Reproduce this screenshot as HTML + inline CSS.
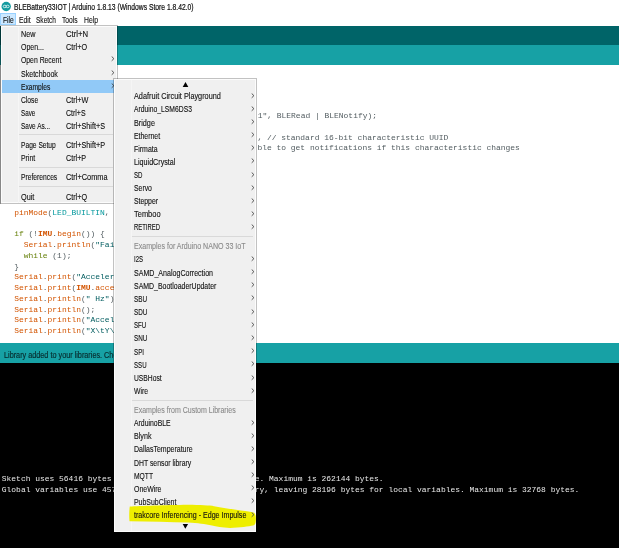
<!DOCTYPE html>
<html><head><meta charset="utf-8">
<style>
*{margin:0;padding:0;box-sizing:border-box}
html,body{width:619px;height:548px;overflow:hidden;background:#fff;position:relative;font-family:"Liberation Sans",sans-serif}
.r{position:absolute}
.t{position:absolute;white-space:pre;line-height:1;filter:blur(0.3px)}
.m{font-family:"Liberation Mono",monospace;font-size:7.965px}
.k{color:#d35400}.kb{color:#d35400;font-weight:bold}.c{color:#00979c}.g{color:#66800a}.p{color:#525c60}.s{color:#005c5f}
.menu{background:#f0f0f0;border:1px solid #fcfcfc;box-shadow:0 0 0 1px rgba(0,0,0,0.24)}
</style></head><body>
<div class="r" style="left:0px;top:0px;width:619px;height:26px;background:#ffffff;"></div>
<div class="r" style="left:0px;top:26.4px;width:619px;height:18.6px;background:#006468;"></div>
<div class="r" style="left:0px;top:45px;width:619px;height:20px;background:#17a1a5;"></div>
<div class="r" style="left:0px;top:65px;width:619px;height:278px;background:#ffffff;"></div>
<div class="r" style="left:0px;top:343px;width:619px;height:20px;background:#17a1a5;"></div>
<div class="r" style="left:0px;top:363px;width:619px;height:185px;background:#000000;"></div>
<svg class="r" style="left:0;top:0" width="13" height="13" viewBox="0 0 13 13"><circle cx="6.2" cy="6.45" r="4.7" fill="#149ba0"/><ellipse cx="4.75" cy="6.45" rx="1.55" ry="1.25" fill="none" stroke="#d8f0f0" stroke-width="0.9"/><ellipse cx="7.65" cy="6.45" rx="1.55" ry="1.25" fill="none" stroke="#d8f0f0" stroke-width="0.9"/></svg>
<div class="t" style="left:14.00px;top:2.98px;font-size:7.4px;color:#111;transform:scale(0.9115,1.1200);transform-origin:0 0;-webkit-text-stroke:0.18px #111;">BLEBattery33IOT | Arduino 1.8.13 (Windows Store 1.8.42.0)</div>
<div class="r" style="left:0px;top:12.7px;width:16.2px;height:12.4px;background:#cce8ff;border:1px solid #99d1ff;box-sizing:border-box"></div>
<div class="t" style="left:2.70px;top:15.78px;font-size:7.4px;color:#111;transform:scale(0.8984,1.1200);transform-origin:0 0;-webkit-text-stroke:0.1px #111;">File</div>
<div class="t" style="left:18.60px;top:15.78px;font-size:7.4px;color:#111;transform:scale(0.9194,1.1200);transform-origin:0 0;-webkit-text-stroke:0.1px #111;">Edit</div>
<div class="t" style="left:35.80px;top:15.78px;font-size:7.4px;color:#111;transform:scale(0.8853,1.1200);transform-origin:0 0;-webkit-text-stroke:0.1px #111;">Sketch</div>
<div class="t" style="left:61.80px;top:15.78px;font-size:7.4px;color:#111;transform:scale(0.9087,1.1200);transform-origin:0 0;-webkit-text-stroke:0.1px #111;">Tools</div>
<div class="t" style="left:83.80px;top:15.78px;font-size:7.4px;color:#111;transform:scale(0.9211,1.1200);transform-origin:0 0;-webkit-text-stroke:0.1px #111;">Help</div>
<div class="t m" style="left:257.70px;top:112.22px"><span class="p">1&quot;, BLERead | BLENotify);</span></div>
<div class="t m" style="left:257.40px;top:133.70px"><span class="p">, // standard 16-bit characteristic UUID</span></div>
<div class="t m" style="left:257.40px;top:144.44px"><span class="p">ble to get notifications if this characteristic changes</span></div>
<div class="t m" style="left:4.60px;top:208.88px"><span class="p">  </span><span class="k">pinMode</span><span class="p">(</span><span class="c">LED_BUILTIN</span><span class="p">, OUTPUT);</span></div>
<div class="t m" style="left:4.60px;top:230.36px"><span class="p">  </span><span class="g">if</span><span class="p"> (!</span><span class="kb">IMU</span><span class="p">.</span><span class="k">begin</span><span class="p">()) {</span></div>
<div class="t m" style="left:4.60px;top:241.10px"><span class="p">    </span><span class="k">Serial</span><span class="p">.</span><span class="k">println</span><span class="p">(</span><span class="s">&quot;Failed to initialize IMU!&quot;</span><span class="p">);</span></div>
<div class="t m" style="left:4.60px;top:251.84px"><span class="p">    </span><span class="g">while</span><span class="p"> (1);</span></div>
<div class="t m" style="left:4.60px;top:262.58px"><span class="p">  }</span></div>
<div class="t m" style="left:4.60px;top:273.32px"><span class="p">  </span><span class="k">Serial</span><span class="p">.</span><span class="k">print</span><span class="p">(</span><span class="s">&quot;Accelerometer sample rate = &quot;</span><span class="p">);</span></div>
<div class="t m" style="left:4.60px;top:284.06px"><span class="p">  </span><span class="k">Serial</span><span class="p">.</span><span class="k">print</span><span class="p">(</span><span class="kb">IMU</span><span class="p">.</span><span class="k">accelerationSampleRate</span><span class="p">());</span></div>
<div class="t m" style="left:4.60px;top:294.80px"><span class="p">  </span><span class="k">Serial</span><span class="p">.</span><span class="k">println</span><span class="p">(</span><span class="s">&quot; Hz&quot;</span><span class="p">);</span></div>
<div class="t m" style="left:4.60px;top:305.54px"><span class="p">  </span><span class="k">Serial</span><span class="p">.</span><span class="k">println</span><span class="p">();</span></div>
<div class="t m" style="left:4.60px;top:316.28px"><span class="p">  </span><span class="k">Serial</span><span class="p">.</span><span class="k">println</span><span class="p">(</span><span class="s">&quot;Acceleration in G&#x27;s&quot;</span><span class="p">);</span></div>
<div class="t m" style="left:4.60px;top:327.02px"><span class="p">  </span><span class="k">Serial</span><span class="p">.</span><span class="k">println</span><span class="p">(</span><span class="s">&quot;X\tY\tZ&quot;</span><span class="p">);</span></div>
<div class="t" style="left:3.90px;top:350.88px;font-size:7.4px;color:#072c2e;transform:scale(0.9825,1.1200);transform-origin:0 0;-webkit-text-stroke:0.15px #072c2e;">Library added to your libraries. Check "Include library" menu</div>
<div class="t m" style="left:1.8px;top:474.82px;color:#e8e8e8">Sketch uses 56416 bytes (21%) of program storage space. Maximum is 262144 bytes.</div>
<div class="t m" style="left:1.8px;top:485.52px;color:#e8e8e8">Global variables use 4572 bytes (13%) of dynamic memory, leaving 28196 bytes for local variables. Maximum is 32768 bytes.</div>
<div class="r menu" style="left:1px;top:26.2px;width:116.2px;height:177.1px"></div>
<div class="r" style="left:0px;top:26px;width:1px;height:178px;background:rgba(0,0,0,0.3);"></div>
<div class="r" style="left:17.5px;top:26.5px;width:1px;height:176px;background:#f6f6f6;"></div>
<div class="r" style="left:1.6px;top:79.8px;width:113px;height:13.1px;background:#91c9f7;"></div>
<div class="t" style="left:20.60px;top:30.08px;font-size:7.4px;color:#101010;transform:scale(0.9732,1.1200);transform-origin:0 0;-webkit-text-stroke:0.1px #101010;">New</div>
<div class="t" style="left:66.00px;top:30.08px;font-size:7.4px;color:#101010;transform:scale(1.0458,1.1200);transform-origin:0 0;-webkit-text-stroke:0.1px #101010;">Ctrl+N</div>
<div class="t" style="left:20.60px;top:43.18px;font-size:7.4px;color:#101010;transform:scale(0.9428,1.1200);transform-origin:0 0;-webkit-text-stroke:0.1px #101010;">Open...</div>
<div class="t" style="left:66.00px;top:43.18px;font-size:7.4px;color:#101010;transform:scale(0.9732,1.1200);transform-origin:0 0;-webkit-text-stroke:0.1px #101010;">Ctrl+O</div>
<div class="t" style="left:20.60px;top:56.38px;font-size:7.4px;color:#101010;transform:scale(0.9252,1.1200);transform-origin:0 0;-webkit-text-stroke:0.1px #101010;">Open Recent</div>
<svg class="r" style="left:111.20px;top:56.40px" width="4" height="6" viewBox="0 0 4 6"><path d="M0.7 0.5 L2.9 2.65 L0.7 4.8" fill="none" stroke="#4a4a4a" stroke-width="0.95"/></svg>
<div class="t" style="left:20.60px;top:69.58px;font-size:7.4px;color:#101010;transform:scale(0.9543,1.1200);transform-origin:0 0;-webkit-text-stroke:0.1px #101010;">Sketchbook</div>
<svg class="r" style="left:111.20px;top:69.60px" width="4" height="6" viewBox="0 0 4 6"><path d="M0.7 0.5 L2.9 2.65 L0.7 4.8" fill="none" stroke="#4a4a4a" stroke-width="0.95"/></svg>
<div class="t" style="left:20.60px;top:82.98px;font-size:7.4px;color:#101010;transform:scale(0.9019,1.1200);transform-origin:0 0;-webkit-text-stroke:0.1px #101010;">Examples</div>
<svg class="r" style="left:111.20px;top:83.00px" width="4" height="6" viewBox="0 0 4 6"><path d="M0.7 0.5 L2.9 2.65 L0.7 4.8" fill="none" stroke="#4a4a4a" stroke-width="0.95"/></svg>
<div class="t" style="left:20.60px;top:96.08px;font-size:7.4px;color:#101010;transform:scale(0.9061,1.1200);transform-origin:0 0;-webkit-text-stroke:0.1px #101010;">Close</div>
<div class="t" style="left:66.00px;top:96.08px;font-size:7.4px;color:#101010;transform:scale(0.9857,1.1200);transform-origin:0 0;-webkit-text-stroke:0.1px #101010;">Ctrl+W</div>
<div class="t" style="left:20.60px;top:109.18px;font-size:7.4px;color:#101010;transform:scale(0.8515,1.1200);transform-origin:0 0;-webkit-text-stroke:0.1px #101010;">Save</div>
<div class="t" style="left:66.00px;top:109.18px;font-size:7.4px;color:#101010;transform:scale(0.9451,1.1200);transform-origin:0 0;-webkit-text-stroke:0.1px #101010;">Ctrl+S</div>
<div class="t" style="left:20.60px;top:122.08px;font-size:7.4px;color:#101010;transform:scale(0.8725,1.1200);transform-origin:0 0;-webkit-text-stroke:0.1px #101010;">Save As...</div>
<div class="t" style="left:66.00px;top:122.08px;font-size:7.4px;color:#101010;transform:scale(0.9797,1.1200);transform-origin:0 0;-webkit-text-stroke:0.1px #101010;">Ctrl+Shift+S</div>
<div class="t" style="left:20.60px;top:141.18px;font-size:7.4px;color:#101010;transform:scale(0.8998,1.1200);transform-origin:0 0;-webkit-text-stroke:0.1px #101010;">Page Setup</div>
<div class="t" style="left:66.00px;top:141.18px;font-size:7.4px;color:#101010;transform:scale(0.9797,1.1200);transform-origin:0 0;-webkit-text-stroke:0.1px #101010;">Ctrl+Shift+P</div>
<div class="t" style="left:20.60px;top:154.28px;font-size:7.4px;color:#101010;transform:scale(0.9275,1.1200);transform-origin:0 0;-webkit-text-stroke:0.1px #101010;">Print</div>
<div class="t" style="left:66.00px;top:154.28px;font-size:7.4px;color:#101010;transform:scale(0.9691,1.1200);transform-origin:0 0;-webkit-text-stroke:0.1px #101010;">Ctrl+P</div>
<div class="t" style="left:20.60px;top:173.38px;font-size:7.4px;color:#101010;transform:scale(0.9090,1.1200);transform-origin:0 0;-webkit-text-stroke:0.1px #101010;">Preferences</div>
<div class="t" style="left:66.00px;top:173.38px;font-size:7.4px;color:#101010;transform:scale(0.9954,1.1200);transform-origin:0 0;-webkit-text-stroke:0.1px #101010;">Ctrl+Comma</div>
<div class="t" style="left:20.60px;top:192.58px;font-size:7.4px;color:#101010;transform:scale(0.9890,1.1200);transform-origin:0 0;-webkit-text-stroke:0.1px #101010;">Quit</div>
<div class="t" style="left:66.00px;top:192.58px;font-size:7.4px;color:#101010;transform:scale(0.9732,1.1200);transform-origin:0 0;-webkit-text-stroke:0.1px #101010;">Ctrl+Q</div>
<div class="r" style="left:19px;top:134.4px;width:94px;height:1px;background:#d9d9d9;"></div>
<div class="r" style="left:19px;top:167.0px;width:94px;height:1px;background:#d9d9d9;"></div>
<div class="r" style="left:19px;top:186.0px;width:94px;height:1px;background:#d9d9d9;"></div>
<div class="r menu" style="left:113.9px;top:78.9px;width:142.5px;height:453.2px"></div>
<div class="r" style="left:131.3px;top:79.5px;width:1px;height:451px;background:#f5f5f5;"></div>
<svg class="r" style="left:0;top:0" width="619" height="548" viewBox="0 0 619 548"><path d="M185.5 82.0 L188.3 86.9 L182.7 86.9z" fill="#000"/><path d="M182.7 523.9 L188.1 523.9 L185.3 528.8z" fill="#000"/></svg>
<svg class="r" style="left:0;top:0" width="619" height="548" viewBox="0 0 619 548"><path d="M129.8 506.6 C140 506 165 505.2 188 504.8 C200 504.9 210 505.4 214 506.2 C222 507.5 232 509.3 241 510.4 C247 511.1 251 511.6 253.5 512.6 C255.6 513.8 255.9 516 255.9 519 C255.9 522.5 255.6 524.8 253 525.5 C249 526.5 240 527.4 230 527.9 C222 527.8 216 526.5 212 525.6 C205 524 198 522.8 188 522.4 C170 522 150 521.6 129.5 521.2 C129 516 129.2 510 129.8 506.6z" fill="#eeee00"/></svg>
<div class="t" style="left:133.60px;top:92.28px;font-size:7.4px;color:#101010;transform:scale(0.9881,1.1200);transform-origin:0 0;-webkit-text-stroke:0.1px #101010;">Adafruit Circuit Playground</div>
<svg class="r" style="left:251.10px;top:92.80px" width="4" height="6" viewBox="0 0 4 6"><path d="M0.7 0.5 L2.9 2.65 L0.7 4.8" fill="none" stroke="#4a4a4a" stroke-width="0.95"/></svg>
<div class="t" style="left:133.60px;top:105.40px;font-size:7.4px;color:#101010;transform:scale(0.9154,1.1200);transform-origin:0 0;-webkit-text-stroke:0.1px #101010;">Arduino_LSM6DS3</div>
<svg class="r" style="left:251.10px;top:105.92px" width="4" height="6" viewBox="0 0 4 6"><path d="M0.7 0.5 L2.9 2.65 L0.7 4.8" fill="none" stroke="#4a4a4a" stroke-width="0.95"/></svg>
<div class="t" style="left:133.60px;top:118.52px;font-size:7.4px;color:#101010;transform:scale(0.9786,1.1200);transform-origin:0 0;-webkit-text-stroke:0.1px #101010;">Bridge</div>
<svg class="r" style="left:251.10px;top:119.04px" width="4" height="6" viewBox="0 0 4 6"><path d="M0.7 0.5 L2.9 2.65 L0.7 4.8" fill="none" stroke="#4a4a4a" stroke-width="0.95"/></svg>
<div class="t" style="left:133.60px;top:131.64px;font-size:7.4px;color:#101010;transform:scale(0.9346,1.1200);transform-origin:0 0;-webkit-text-stroke:0.1px #101010;">Ethernet</div>
<svg class="r" style="left:251.10px;top:132.16px" width="4" height="6" viewBox="0 0 4 6"><path d="M0.7 0.5 L2.9 2.65 L0.7 4.8" fill="none" stroke="#4a4a4a" stroke-width="0.95"/></svg>
<div class="t" style="left:133.60px;top:144.76px;font-size:7.4px;color:#101010;transform:scale(0.9395,1.1200);transform-origin:0 0;-webkit-text-stroke:0.1px #101010;">Firmata</div>
<svg class="r" style="left:251.10px;top:145.28px" width="4" height="6" viewBox="0 0 4 6"><path d="M0.7 0.5 L2.9 2.65 L0.7 4.8" fill="none" stroke="#4a4a4a" stroke-width="0.95"/></svg>
<div class="t" style="left:133.60px;top:157.88px;font-size:7.4px;color:#101010;transform:scale(0.9689,1.1200);transform-origin:0 0;-webkit-text-stroke:0.1px #101010;">LiquidCrystal</div>
<svg class="r" style="left:251.10px;top:158.40px" width="4" height="6" viewBox="0 0 4 6"><path d="M0.7 0.5 L2.9 2.65 L0.7 4.8" fill="none" stroke="#4a4a4a" stroke-width="0.95"/></svg>
<div class="t" style="left:133.60px;top:171.00px;font-size:7.4px;color:#101010;transform:scale(0.8251,1.1200);transform-origin:0 0;-webkit-text-stroke:0.1px #101010;">SD</div>
<svg class="r" style="left:251.10px;top:171.52px" width="4" height="6" viewBox="0 0 4 6"><path d="M0.7 0.5 L2.9 2.65 L0.7 4.8" fill="none" stroke="#4a4a4a" stroke-width="0.95"/></svg>
<div class="t" style="left:133.60px;top:184.12px;font-size:7.4px;color:#101010;transform:scale(0.9275,1.1200);transform-origin:0 0;-webkit-text-stroke:0.1px #101010;">Servo</div>
<svg class="r" style="left:251.10px;top:184.64px" width="4" height="6" viewBox="0 0 4 6"><path d="M0.7 0.5 L2.9 2.65 L0.7 4.8" fill="none" stroke="#4a4a4a" stroke-width="0.95"/></svg>
<div class="t" style="left:133.60px;top:197.24px;font-size:7.4px;color:#101010;transform:scale(0.9288,1.1200);transform-origin:0 0;-webkit-text-stroke:0.1px #101010;">Stepper</div>
<svg class="r" style="left:251.10px;top:197.76px" width="4" height="6" viewBox="0 0 4 6"><path d="M0.7 0.5 L2.9 2.65 L0.7 4.8" fill="none" stroke="#4a4a4a" stroke-width="0.95"/></svg>
<div class="t" style="left:133.60px;top:210.36px;font-size:7.4px;color:#101010;transform:scale(1.0094,1.1200);transform-origin:0 0;-webkit-text-stroke:0.1px #101010;">Temboo</div>
<svg class="r" style="left:251.10px;top:210.88px" width="4" height="6" viewBox="0 0 4 6"><path d="M0.7 0.5 L2.9 2.65 L0.7 4.8" fill="none" stroke="#4a4a4a" stroke-width="0.95"/></svg>
<div class="t" style="left:133.60px;top:223.48px;font-size:7.4px;color:#101010;transform:scale(0.7986,1.1200);transform-origin:0 0;-webkit-text-stroke:0.1px #101010;">RETIRED</div>
<svg class="r" style="left:251.10px;top:224.00px" width="4" height="6" viewBox="0 0 4 6"><path d="M0.7 0.5 L2.9 2.65 L0.7 4.8" fill="none" stroke="#4a4a4a" stroke-width="0.95"/></svg>
<div class="t" style="left:133.60px;top:242.48px;font-size:7.4px;color:#8a8a8a;transform:scale(0.9560,1.1200);transform-origin:0 0;-webkit-text-stroke:0.1px #8a8a8a;">Examples for Arduino NANO 33 IoT</div>
<div class="t" style="left:133.60px;top:255.38px;font-size:7.4px;color:#101010;transform:scale(0.8199,1.1200);transform-origin:0 0;-webkit-text-stroke:0.1px #101010;">I2S</div>
<svg class="r" style="left:251.10px;top:255.90px" width="4" height="6" viewBox="0 0 4 6"><path d="M0.7 0.5 L2.9 2.65 L0.7 4.8" fill="none" stroke="#4a4a4a" stroke-width="0.95"/></svg>
<div class="t" style="left:133.60px;top:268.56px;font-size:7.4px;color:#101010;transform:scale(0.9571,1.1200);transform-origin:0 0;-webkit-text-stroke:0.1px #101010;">SAMD_AnalogCorrection</div>
<svg class="r" style="left:251.10px;top:269.08px" width="4" height="6" viewBox="0 0 4 6"><path d="M0.7 0.5 L2.9 2.65 L0.7 4.8" fill="none" stroke="#4a4a4a" stroke-width="0.95"/></svg>
<div class="t" style="left:133.60px;top:281.74px;font-size:7.4px;color:#101010;transform:scale(0.9412,1.1200);transform-origin:0 0;-webkit-text-stroke:0.1px #101010;">SAMD_BootloaderUpdater</div>
<svg class="r" style="left:251.10px;top:282.26px" width="4" height="6" viewBox="0 0 4 6"><path d="M0.7 0.5 L2.9 2.65 L0.7 4.8" fill="none" stroke="#4a4a4a" stroke-width="0.95"/></svg>
<div class="t" style="left:133.60px;top:294.92px;font-size:7.4px;color:#101010;transform:scale(0.8635,1.1200);transform-origin:0 0;-webkit-text-stroke:0.1px #101010;">SBU</div>
<svg class="r" style="left:251.10px;top:295.44px" width="4" height="6" viewBox="0 0 4 6"><path d="M0.7 0.5 L2.9 2.65 L0.7 4.8" fill="none" stroke="#4a4a4a" stroke-width="0.95"/></svg>
<div class="t" style="left:133.60px;top:308.10px;font-size:7.4px;color:#101010;transform:scale(0.8571,1.1200);transform-origin:0 0;-webkit-text-stroke:0.1px #101010;">SDU</div>
<svg class="r" style="left:251.10px;top:308.62px" width="4" height="6" viewBox="0 0 4 6"><path d="M0.7 0.5 L2.9 2.65 L0.7 4.8" fill="none" stroke="#4a4a4a" stroke-width="0.95"/></svg>
<div class="t" style="left:133.60px;top:321.28px;font-size:7.4px;color:#101010;transform:scale(0.8293,1.1200);transform-origin:0 0;-webkit-text-stroke:0.1px #101010;">SFU</div>
<svg class="r" style="left:251.10px;top:321.80px" width="4" height="6" viewBox="0 0 4 6"><path d="M0.7 0.5 L2.9 2.65 L0.7 4.8" fill="none" stroke="#4a4a4a" stroke-width="0.95"/></svg>
<div class="t" style="left:133.60px;top:334.46px;font-size:7.4px;color:#101010;transform:scale(0.8571,1.1200);transform-origin:0 0;-webkit-text-stroke:0.1px #101010;">SNU</div>
<svg class="r" style="left:251.10px;top:334.98px" width="4" height="6" viewBox="0 0 4 6"><path d="M0.7 0.5 L2.9 2.65 L0.7 4.8" fill="none" stroke="#4a4a4a" stroke-width="0.95"/></svg>
<div class="t" style="left:133.60px;top:347.64px;font-size:7.4px;color:#101010;transform:scale(0.8461,1.1200);transform-origin:0 0;-webkit-text-stroke:0.1px #101010;">SPI</div>
<svg class="r" style="left:251.10px;top:348.16px" width="4" height="6" viewBox="0 0 4 6"><path d="M0.7 0.5 L2.9 2.65 L0.7 4.8" fill="none" stroke="#4a4a4a" stroke-width="0.95"/></svg>
<div class="t" style="left:133.60px;top:360.82px;font-size:7.4px;color:#101010;transform:scale(0.8293,1.1200);transform-origin:0 0;-webkit-text-stroke:0.1px #101010;">SSU</div>
<svg class="r" style="left:251.10px;top:361.34px" width="4" height="6" viewBox="0 0 4 6"><path d="M0.7 0.5 L2.9 2.65 L0.7 4.8" fill="none" stroke="#4a4a4a" stroke-width="0.95"/></svg>
<div class="t" style="left:133.60px;top:374.00px;font-size:7.4px;color:#101010;transform:scale(0.9099,1.1200);transform-origin:0 0;-webkit-text-stroke:0.1px #101010;">USBHost</div>
<svg class="r" style="left:251.10px;top:374.52px" width="4" height="6" viewBox="0 0 4 6"><path d="M0.7 0.5 L2.9 2.65 L0.7 4.8" fill="none" stroke="#4a4a4a" stroke-width="0.95"/></svg>
<div class="t" style="left:133.60px;top:387.18px;font-size:7.4px;color:#101010;transform:scale(0.9275,1.1200);transform-origin:0 0;-webkit-text-stroke:0.1px #101010;">Wire</div>
<svg class="r" style="left:251.10px;top:387.70px" width="4" height="6" viewBox="0 0 4 6"><path d="M0.7 0.5 L2.9 2.65 L0.7 4.8" fill="none" stroke="#4a4a4a" stroke-width="0.95"/></svg>
<div class="t" style="left:133.60px;top:406.28px;font-size:7.4px;color:#8a8a8a;transform:scale(0.9482,1.1200);transform-origin:0 0;-webkit-text-stroke:0.1px #8a8a8a;">Examples from Custom Libraries</div>
<div class="t" style="left:133.60px;top:419.28px;font-size:7.4px;color:#101010;transform:scale(0.9291,1.1200);transform-origin:0 0;-webkit-text-stroke:0.1px #101010;">ArduinoBLE</div>
<svg class="r" style="left:251.10px;top:419.80px" width="4" height="6" viewBox="0 0 4 6"><path d="M0.7 0.5 L2.9 2.65 L0.7 4.8" fill="none" stroke="#4a4a4a" stroke-width="0.95"/></svg>
<div class="t" style="left:133.60px;top:432.38px;font-size:7.4px;color:#101010;transform:scale(0.9651,1.1200);transform-origin:0 0;-webkit-text-stroke:0.1px #101010;">Blynk</div>
<svg class="r" style="left:251.10px;top:432.90px" width="4" height="6" viewBox="0 0 4 6"><path d="M0.7 0.5 L2.9 2.65 L0.7 4.8" fill="none" stroke="#4a4a4a" stroke-width="0.95"/></svg>
<div class="t" style="left:133.60px;top:445.48px;font-size:7.4px;color:#101010;transform:scale(0.9464,1.1200);transform-origin:0 0;-webkit-text-stroke:0.1px #101010;">DallasTemperature</div>
<svg class="r" style="left:251.10px;top:446.00px" width="4" height="6" viewBox="0 0 4 6"><path d="M0.7 0.5 L2.9 2.65 L0.7 4.8" fill="none" stroke="#4a4a4a" stroke-width="0.95"/></svg>
<div class="t" style="left:133.60px;top:458.58px;font-size:7.4px;color:#101010;transform:scale(0.9302,1.1200);transform-origin:0 0;-webkit-text-stroke:0.1px #101010;">DHT sensor library</div>
<svg class="r" style="left:251.10px;top:459.10px" width="4" height="6" viewBox="0 0 4 6"><path d="M0.7 0.5 L2.9 2.65 L0.7 4.8" fill="none" stroke="#4a4a4a" stroke-width="0.95"/></svg>
<div class="t" style="left:133.60px;top:471.68px;font-size:7.4px;color:#101010;transform:scale(0.9115,1.1200);transform-origin:0 0;-webkit-text-stroke:0.1px #101010;">MQTT</div>
<svg class="r" style="left:251.10px;top:472.20px" width="4" height="6" viewBox="0 0 4 6"><path d="M0.7 0.5 L2.9 2.65 L0.7 4.8" fill="none" stroke="#4a4a4a" stroke-width="0.95"/></svg>
<div class="t" style="left:133.60px;top:484.78px;font-size:7.4px;color:#101010;transform:scale(0.9423,1.1200);transform-origin:0 0;-webkit-text-stroke:0.1px #101010;">OneWire</div>
<svg class="r" style="left:251.10px;top:485.30px" width="4" height="6" viewBox="0 0 4 6"><path d="M0.7 0.5 L2.9 2.65 L0.7 4.8" fill="none" stroke="#4a4a4a" stroke-width="0.95"/></svg>
<div class="t" style="left:133.60px;top:497.88px;font-size:7.4px;color:#101010;transform:scale(0.9377,1.1200);transform-origin:0 0;-webkit-text-stroke:0.1px #101010;">PubSubClient</div>
<svg class="r" style="left:251.10px;top:498.40px" width="4" height="6" viewBox="0 0 4 6"><path d="M0.7 0.5 L2.9 2.65 L0.7 4.8" fill="none" stroke="#4a4a4a" stroke-width="0.95"/></svg>
<div class="t" style="left:133.60px;top:510.98px;font-size:7.4px;color:#101010;transform:scale(0.9595,1.1200);transform-origin:0 0;-webkit-text-stroke:0.1px #101010;">trakcore Inferencing - Edge Impulse</div>
<svg class="r" style="left:251.10px;top:511.50px" width="4" height="6" viewBox="0 0 4 6"><path d="M0.7 0.5 L2.9 2.65 L0.7 4.8" fill="none" stroke="#4a4a4a" stroke-width="0.95"/></svg>
<div class="r" style="left:132px;top:236.0px;width:121px;height:1px;background:#d9d9d9;"></div>
<div class="r" style="left:132px;top:399.6px;width:121px;height:1px;background:#d9d9d9;"></div>
</body></html>
